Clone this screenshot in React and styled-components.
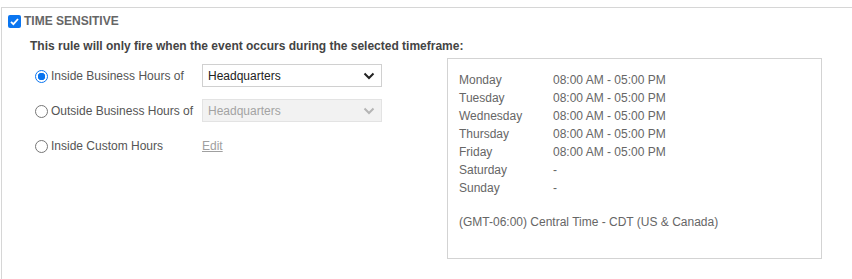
import React from 'react'
import styled, { createGlobalStyle } from 'styled-components'

const GlobalStyle = createGlobalStyle`
  body {
    margin: 0;
    background: #fff;
    font-family: "Liberation Sans", Arial, sans-serif;
    overflow: hidden;
  }
`

const schedule = [
    ['Monday', '08:00 AM - 05:00 PM'],
    ['Tuesday', '08:00 AM - 05:00 PM'],
    ['Wednesday', '08:00 AM - 05:00 PM'],
    ['Thursday', '08:00 AM - 05:00 PM'],
    ['Friday', '08:00 AM - 05:00 PM'],
    ['Saturday', '-'],
    ['Sunday', '-'],
]

const Chevron = ({ disabled }) => (
    <svg width="12" height="8" viewBox="0 0 12 8">
        <path
            d="M1.5 1.5 L6 6 L10.5 1.5"
            fill="none"
            stroke={disabled ? '#b5b5b5' : '#222'}
            strokeWidth="2"
        />
    </svg>
)

const Option = ({ checked, label, children }) => (
    <OptionRow>
        <RadioLabel>
            <Radio checked={checked} />
            {label}
        </RadioLabel>
        {children}
    </OptionRow>
)

export default function App() {
    return (
        <>
            <GlobalStyle />
            <Section>
                <Header>
                    <Checkbox>
                        <svg width="11" height="11" viewBox="0 0 11 11">
                            <path d="M2 5.8 L4.4 8.2 L9 3" fill="none" stroke="#fff" strokeWidth="1.8" />
                        </svg>
                    </Checkbox>
                    <Title>TIME SENSITIVE</Title>
                </Header>
                <Body>
                    <Subtitle>This rule will only fire when the event occurs during the selected timeframe:</Subtitle>
                    <Columns>
                        <Options>
                            <Option checked label="Inside Business Hours of">
                                <Select>
                                    Headquarters
                                    <Chevron />
                                </Select>
                            </Option>
                            <Option label="Outside Business Hours of">
                                <Select disabled>
                                    Headquarters
                                    <Chevron disabled />
                                </Select>
                            </Option>
                            <Option label="Inside Custom Hours">
                                <EditLink>Edit</EditLink>
                            </Option>
                        </Options>
                        <ScheduleBox>
                            {schedule.map(([day, hours]) => (
                                <DayRow key={day}>
                                    <Day>{day}</Day>
                                    <span>{hours}</span>
                                </DayRow>
                            ))}
                            <Timezone>(GMT-06:00) Central Time - CDT (US &amp; Canada)</Timezone>
                        </ScheduleBox>
                    </Columns>
                </Body>
            </Section>
        </>
    )
}

const Section = styled.div`
  margin: 7px 0 0 1px;
  min-height: calc(100vh - 8px);
  border-top: 1px solid #d6d6d6;
  border-left: 1px solid #d6d6d6;
`

const Header = styled.div`
  display: flex;
  align-items: center;
  gap: 3px;
  padding: 6px 0 0 6px;
`

const Checkbox = styled.span`
  width: 13px;
  height: 13px;
  border-radius: 2px;
  background: #0a75f0;
  display: flex;
  align-items: center;
  justify-content: center;
`

const Title = styled.span`
  font-size: 12px;
  font-weight: bold;
  color: #666;
  line-height: 14px;
`

const Body = styled.div`
  padding: 10px 0 0 28px;
`

const Subtitle = styled.div`
  font-size: 12px;
  font-weight: bold;
  color: #444;
  line-height: 16px;
`

const Columns = styled.div`
  display: flex;
  align-items: flex-start;
  margin-top: 4px;
`

const Options = styled.div`
  display: flex;
  flex-direction: column;
  gap: 12px;
  padding: 6px 0 0 5px;
  width: 412px;
`

const OptionRow = styled.div`
  display: flex;
  align-items: center;
  height: 23px;
`

const RadioLabel = styled.label`
  display: flex;
  align-items: center;
  width: 167px;
  font-size: 12px;
  color: #555;
  gap: 3px;
`

const Radio = styled.span`
  box-sizing: border-box;
  width: 13px;
  height: 13px;
  margin-top: 1px;
  border-radius: 50%;
  border: 1px solid ${({ checked }) => (checked ? '#0a75f0' : '#767676')};
  background: ${({ checked }) =>
      checked ? 'radial-gradient(circle, #0a75f0 0 3.5px, #fff 4px)' : '#fff'};
`

const Select = styled.div`
  box-sizing: border-box;
  width: 180px;
  height: 23px;
  display: flex;
  align-items: center;
  justify-content: space-between;
  padding: 0 6px 0 5px;
  font-size: 12px;
  border: 1px solid ${({ disabled }) => (disabled ? '#e3e3e3' : '#d0d0d0')};
  background: ${({ disabled }) => (disabled ? '#f2f2f2' : '#fff')};
  color: ${({ disabled }) => (disabled ? '#a3a3a3' : '#222')};
`

const EditLink = styled.span`
  font-size: 12px;
  color: #a0a0a0;
  text-decoration: underline;
`

const ScheduleBox = styled.div`
  box-sizing: border-box;
  width: 375px;
  height: 201px;
  border: 1px solid #d3d3d3;
  padding: 12px 11px;
  font-size: 12px;
  color: #666;
  line-height: 18px;
`

const DayRow = styled.div`
  display: flex;
`

const Day = styled.span`
  width: 94px;
`

const Timezone = styled.div`
  margin-top: 16px;
`
